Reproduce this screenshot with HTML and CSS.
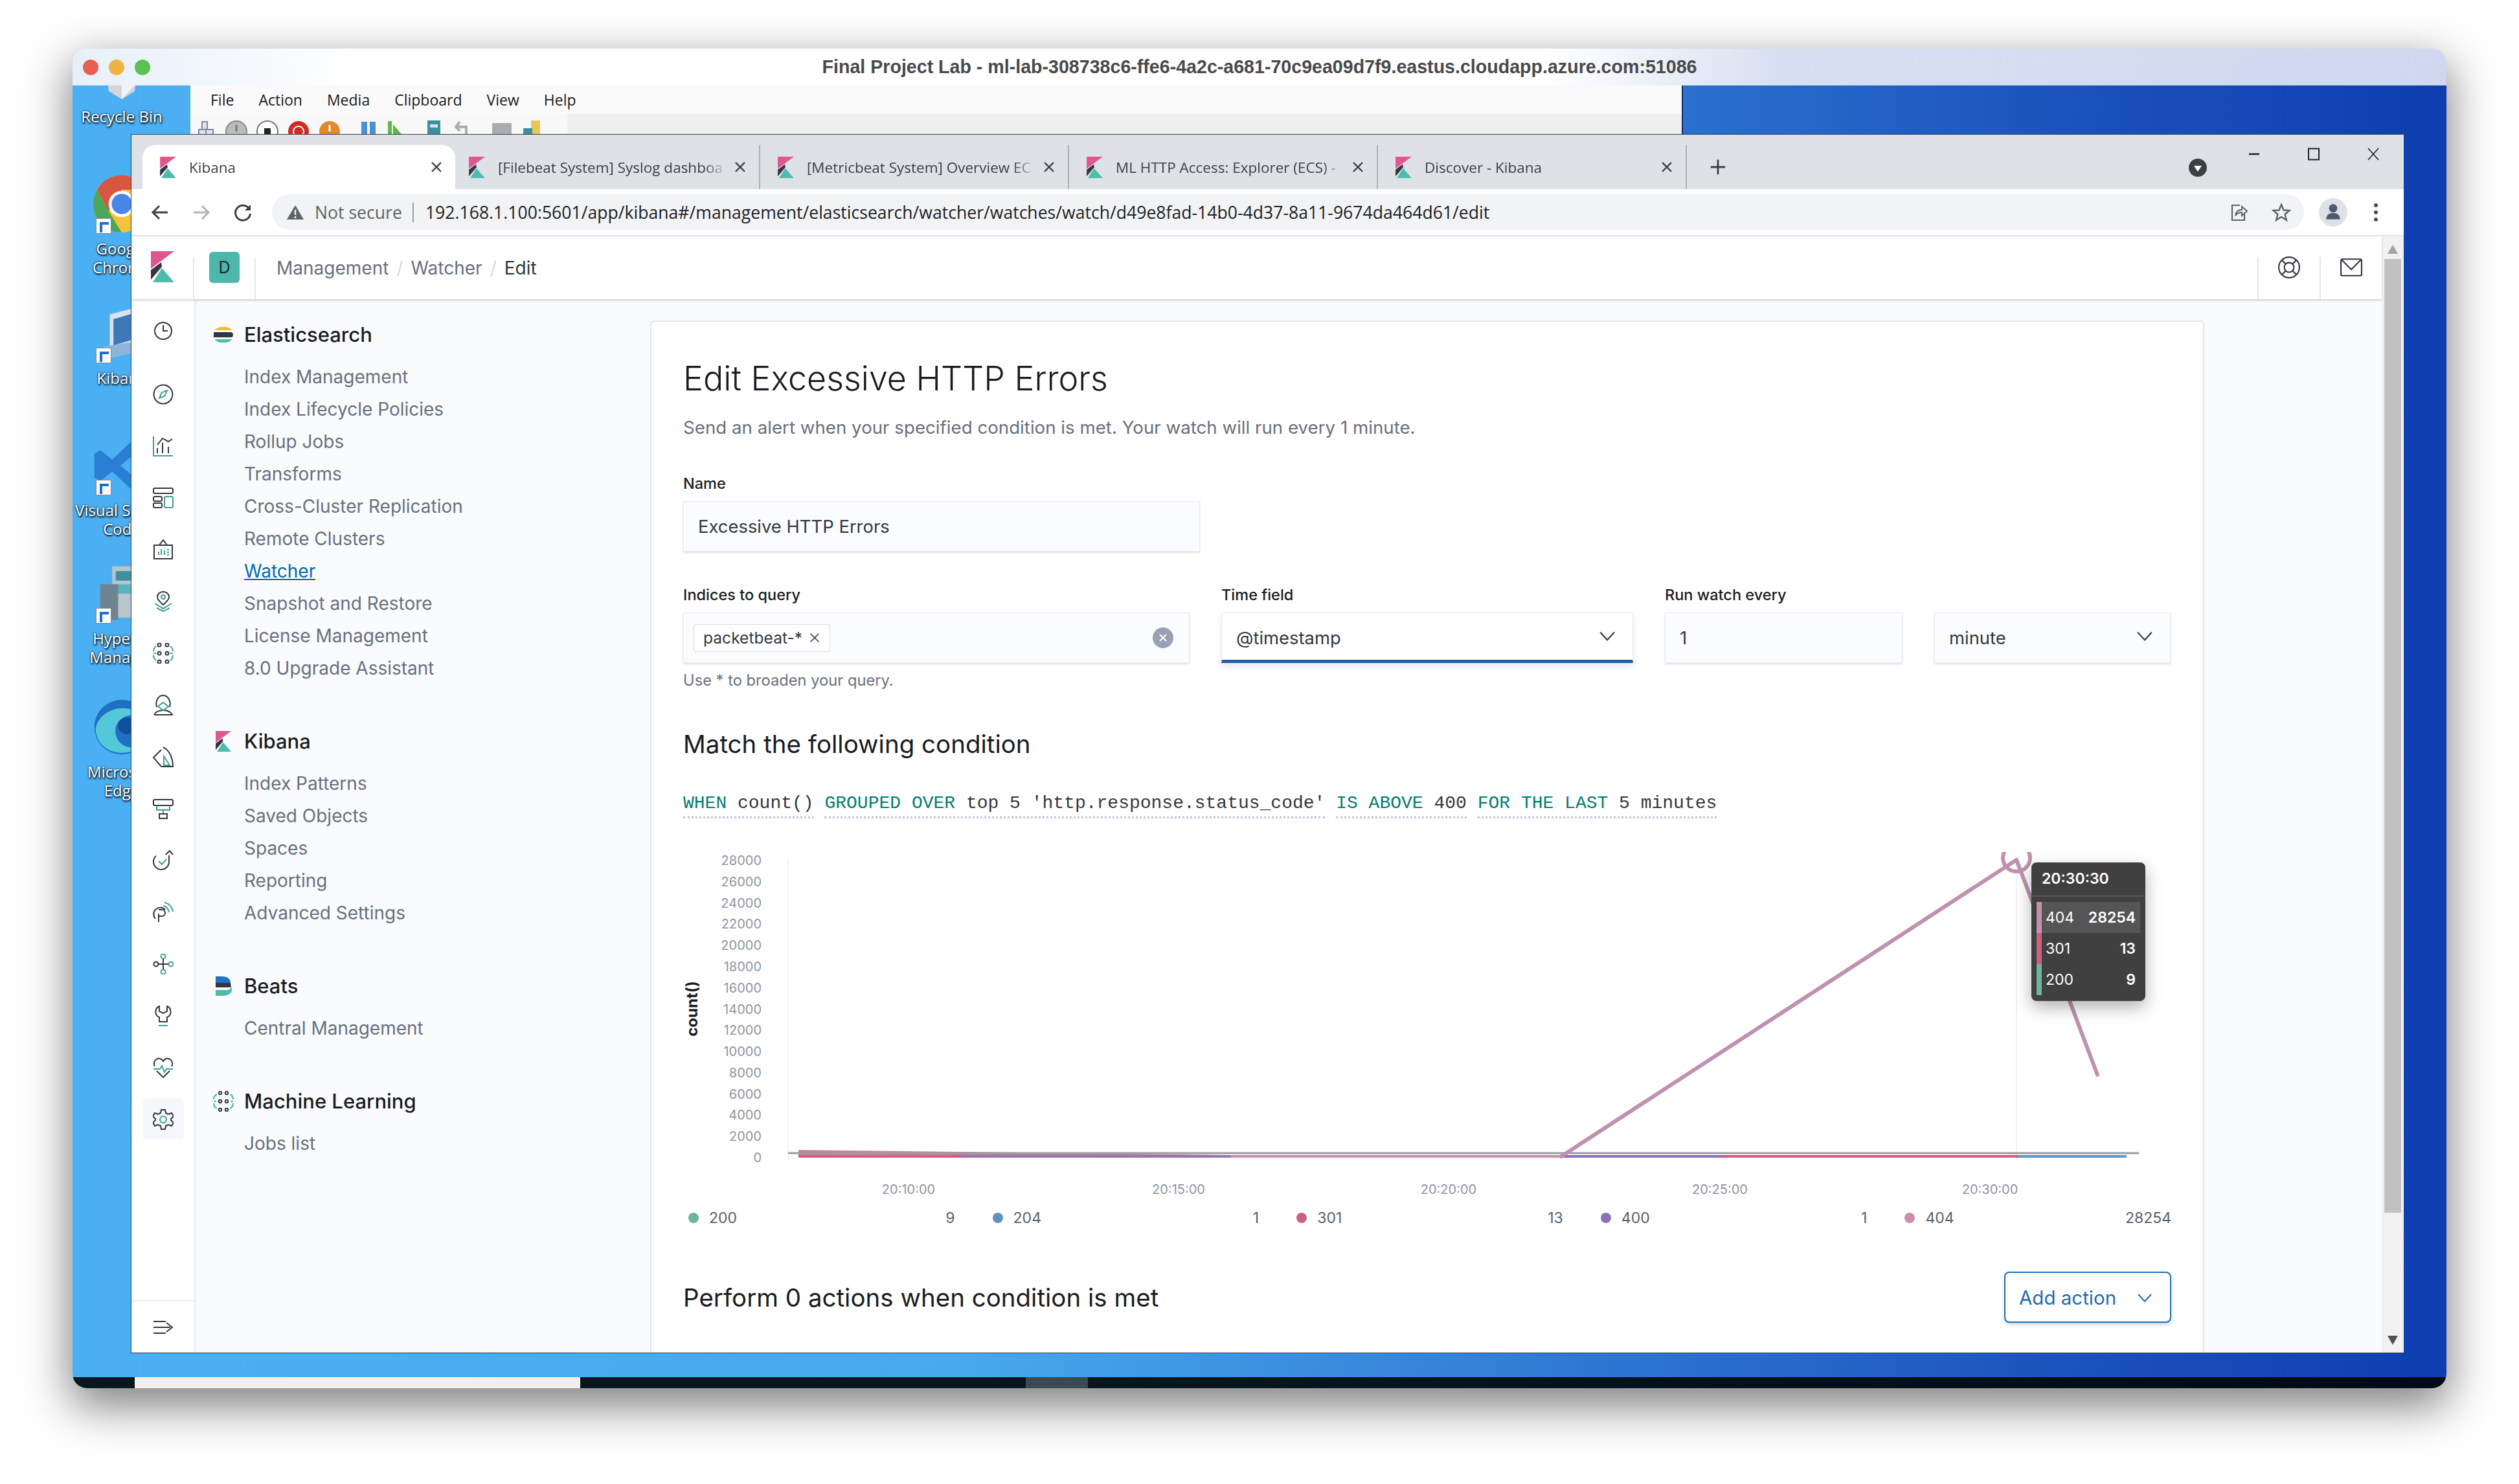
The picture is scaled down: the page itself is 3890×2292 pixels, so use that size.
FILE: index.html
```html
<!DOCTYPE html>
<html>
<head>
   <meta charset="UTF-8">
   <title>Edit Excessive HTTP Errors - Kibana</title>
   <link rel="stylesheet" href="styles.css">
</head>
<body>
<svg class="defs" width="0" height="0">
   <symbol id="kib" viewBox="0 0 36 48">
      <path fill="#e0568f" d="M0 0H36L0 27Z"/>
      <path fill="#343741" d="M0 29L16 17L17 24L0 44Z"/>
      <path fill="#4cbcae" d="M3 48L17 26L36 48Z"/>
   </symbol>
   <symbol id="x" viewBox="0 0 20 20">
      <path d="M3 3L17 17M17 3L3 17" fill="none" stroke="#3c4043" stroke-width="2.4"/>
   </symbol>
   <symbol id="chev" viewBox="0 0 24 24">
      <path d="M2 7L12 18L22 7" fill="none" stroke="currentColor" stroke-width="2"/>
   </symbol>
</svg>

<div class="mac">
   <div class="mac-title">
      <div class="lights"><i class="red"></i><i class="yellow"></i><i class="green"></i></div>
      <div class="mac-name">Final Project Lab - ml-lab-308738c6-ffe6-4a2c-a681-70c9ea09d7f9.eastus.cloudapp.azure.com:51086</div>
   </div>

   <div class="desktop">
      <div class="desk-icon recycle">
         <svg class="desk-pic" viewBox="0 0 100 100"><path fill="#d4d6da" d="M24 30L76 30L72 82L50 96L28 82Z"/><path fill="#f2f3f5" d="M50 60L72 72L50 96Z"/></svg>
         <span>Recycle Bin</span>
      </div>
      <div class="desk-icon chrome">
         <svg class="desk-pic" viewBox="0 0 100 100">
            <circle cx="50" cy="50" r="48" fill="#f5c33b"/>
            <path fill="#d8553f" d="M8.4 26A48 48 0 0 1 91.6 26H50L28 62Z"/>
            <path fill="#4fa657" d="M8.4 26L28 62L50 98A48 48 0 0 1 8.4 26Z"/>
            <circle cx="50" cy="50" r="22" fill="#fff"/>
            <circle cx="50" cy="50" r="17" fill="#4a86e8"/>
         </svg>
         <b class="shortcut"></b>
         <span>Google Chrome</span>
      </div>
      <div class="desk-icon kib-short">
         <svg class="desk-pic" viewBox="0 0 100 100">
            <path fill="#d9e3ee" d="M30 18L76 6V70L30 80Z"/>
            <path fill="#3f78b8" d="M36 26L70 16V60L36 70Z"/>
            <path fill="#8fb4da" d="M20 72L82 62L92 78L26 92Z"/>
         </svg>
         <b class="shortcut"></b>
         <span>Kibana</span>
      </div>
      <div class="desk-icon vs">
         <svg class="desk-pic" viewBox="0 0 100 100">
            <path fill="#2a7fd4" d="M72 4L92 14V86L72 96L34 60L14 76L4 70V30L14 24L34 40ZM72 30L48 50L72 70Z"/>
         </svg>
         <b class="shortcut"></b>
         <span>Visual Studio Code</span>
      </div>
      <div class="desk-icon hyper">
         <svg class="desk-pic" viewBox="0 0 100 100">
            <rect x="34" y="4" width="52" height="86" fill="#b9c4cd"/>
            <rect x="40" y="12" width="40" height="16" fill="#3f8f9e"/>
            <rect x="40" y="34" width="40" height="16" fill="#5cb3c0"/>
            <rect x="14" y="34" width="30" height="60" fill="#6f8491"/>
         </svg>
         <b class="shortcut"></b>
         <span>Hyper-V Manager</span>
      </div>
      <div class="desk-icon edge">
         <svg class="desk-pic" viewBox="0 0 100 100">
            <circle cx="50" cy="50" r="46" fill="#1f6fc4"/>
            <path fill="#54c8d8" d="M6 54C10 20 62 4 86 34C70 22 34 34 40 62C44 84 70 92 90 74C70 104 10 100 6 54Z"/>
            <circle cx="58" cy="48" r="14" fill="#0f4f9c"/>
         </svg>
         <span>Microsoft Edge</span>
      </div>

      <div class="vm-window">
         <div class="vm-menu">
            <span>File</span><span>Action</span><span>Media</span><span>Clipboard</span><span>View</span><span>Help</span>
         </div>
         <div class="vm-tools">
            <div class="vm-bar">
               <svg width="30" height="34" viewBox="0 0 30 34"><path d="M3 16h11v14H3zM8 4h8v12H8zM14 16h11v14H14z" fill="#dfe3ea" stroke="#8088a0" stroke-width="2"/></svg>
               <svg width="34" height="36" viewBox="0 0 34 36"><circle cx="17" cy="19" r="16" fill="#bbb" stroke="#888" stroke-width="2"/><path d="M17 9v10" stroke="#777" stroke-width="3"/></svg>
               <svg width="34" height="36" viewBox="0 0 34 36"><circle cx="17" cy="19" r="16" fill="#fff" stroke="#777" stroke-width="2"/><rect x="12" y="14" width="10" height="10" fill="#222"/></svg>
               <svg width="34" height="36" viewBox="0 0 34 36"><circle cx="17" cy="19" r="16" fill="#d02c24"/><circle cx="17" cy="19" r="8" fill="none" stroke="#fff" stroke-width="2"/></svg>
               <svg width="34" height="36" viewBox="0 0 34 36"><circle cx="17" cy="19" r="16" fill="#e08a2a"/><path d="M17 9v10" stroke="#fff" stroke-width="3"/></svg>
               <svg class="vm-gap" width="26" height="30" viewBox="0 0 26 30"><path d="M2 4h9v24H2zM15 4h9v24h-9z" fill="#4a90d9"/></svg>
               <svg width="30" height="30" viewBox="0 0 30 30"><path d="M3 3h6v26H3zM11 8l17 20H11z" fill="#5cb848"/></svg>
               <svg class="vm-gap" width="32" height="36" viewBox="0 0 32 36"><rect x="4" y="2" width="20" height="30" fill="#3d8fa0"/><rect x="8" y="8" width="12" height="5" fill="#cfe6ec"/></svg>
               <svg width="26" height="30" viewBox="0 0 26 30"><path d="M8 4L2 12L8 18M3 12H18V28" fill="none" stroke="#a8adb5" stroke-width="4"/></svg>
               <svg class="vm-gap" width="34" height="36" viewBox="0 0 34 36"><rect x="2" y="6" width="30" height="28" fill="#a9adb2"/></svg>
               <svg width="30" height="36" viewBox="0 0 30 36"><rect x="14" y="2" width="14" height="32" fill="#e8c75c"/><rect x="2" y="14" width="14" height="20" fill="#3d8fa0"/></svg>
            </div>
         </div>
      </div>

      <div class="browser">
         <div class="tabs">
            <div class="tab active">
               <svg class="fav"><use href="#kib"/></svg>
               <span class="tab-name">Kibana</span>
               <svg class="tab-x"><use href="#x"/></svg>
            </div>
            <div class="tab">
               <svg class="fav"><use href="#kib"/></svg>
               <span class="tab-name">[Filebeat System] Syslog dashboa</span>
               <svg class="tab-x"><use href="#x"/></svg>
            </div>
            <div class="tab">
               <svg class="fav"><use href="#kib"/></svg>
               <span class="tab-name">[Metricbeat System] Overview EC</span>
               <svg class="tab-x"><use href="#x"/></svg>
            </div>
            <div class="tab">
               <svg class="fav"><use href="#kib"/></svg>
               <span class="tab-name">ML HTTP Access: Explorer (ECS) -</span>
               <svg class="tab-x"><use href="#x"/></svg>
            </div>
            <div class="tab">
               <svg class="fav"><use href="#kib"/></svg>
               <span class="tab-name">Discover - Kibana</span>
               <svg class="tab-x"><use href="#x"/></svg>
            </div>
            <svg class="new-tab" viewBox="0 0 28 28"><path d="M14 2V26M2 14H26" stroke="#3c4043" stroke-width="3"/></svg>
            <div class="tab-search"><svg viewBox="0 0 28 28"><circle cx="14" cy="14" r="14" fill="#3c4043"/><path d="M8 11H20L14 20Z" fill="#fff"/></svg></div>
            <div class="win-btns">
               <svg viewBox="0 0 20 20"><path d="M2 10H18" stroke="#222" stroke-width="2.4"/></svg>
               <svg viewBox="0 0 20 20"><rect x="2" y="1.5" width="16" height="17" fill="none" stroke="#222" stroke-width="2"/></svg>
               <svg viewBox="0 0 20 20"><path d="M2 1L18 19M18 1L2 19" stroke="#222" stroke-width="1.6"/></svg>
            </div>
         </div>

         <div class="toolbar">
            <svg class="nav-btn" viewBox="0 0 30 30"><path d="M27 15H4M14 5L4 15L14 25" fill="none" stroke="#3c4043" stroke-width="3"/></svg>
            <svg class="nav-btn" viewBox="0 0 30 30"><path d="M3 15H26M16 5L26 15L16 25" fill="none" stroke="#b0b3b8" stroke-width="3"/></svg>
            <svg class="nav-btn" viewBox="0 0 30 30"><path d="M25 10A11.500 11.500 0 1 0 26.500 17" fill="none" stroke="#3c4043" stroke-width="3"/><path d="M27 3V12H18Z" fill="#3c4043"/></svg>
            <div class="omnibox">
               <svg class="warn" viewBox="0 0 28 24"><path d="M14 1L27 23H1Z" fill="#5f6368"/><path d="M14 8V16M14 18V21" stroke="#f1f3f4" stroke-width="2.500"/></svg>
               <span class="not-secure">Not secure</span>
               <i class="omni-sep"></i>
               <span class="url">192.168.1.100:5601/app/kibana#/management/elasticsearch/watcher/watches/watch/d49e8fad-14b0-4d37-8a11-9674da464d61/edit</span>
               <svg class="omni-icon" viewBox="0 0 30 30"><path d="M17 4H5V27H24V17" fill="none" stroke="#5f6368" stroke-width="2.200"/><path d="M10 20C11 13 16 11 20 11V6L28 13L20 20V15C16 15 13 16 10 20Z" fill="none" stroke="#5f6368" stroke-width="2"/></svg>
               <svg class="omni-icon" viewBox="0 0 30 30"><path d="M15 3L18.500 11.500L27.500 12L20.500 18L23 27L15 22L7 27L9.500 18L2.500 12L11.500 11.500Z" fill="none" stroke="#5f6368" stroke-width="2.400"/></svg>
            </div>
            <div class="profile"><svg viewBox="0 0 30 30"><circle cx="15" cy="9" r="6" fill="#4b5a73"/><path d="M5 25C5 18 10 16 15 16S25 18 25 25Z" fill="#4b5a73"/></svg></div>
            <svg class="kebab" viewBox="0 0 8 30"><circle cx="4" cy="4" r="3" fill="#4a4d52"/><circle cx="4" cy="15" r="3" fill="#4a4d52"/><circle cx="4" cy="26" r="3" fill="#4a4d52"/></svg>
         </div>

         <div class="viewport">
            <div class="page">
               <header class="top">
                  <div class="logo-cell"><svg class="logo"><use href="#kib"/></svg></div>
                  <div class="avatar-cell"><div class="avatar">D</div></div>
                  <nav class="crumbs">
                     <span>Management</span><i>/</i><span>Watcher</span><i>/</i><span class="last">Edit</span>
                  </nav>
                  <div class="top-icon">
                     <svg viewBox="0 0 32 32" fill="none" stroke="#343741" stroke-width="2"><circle cx="16" cy="16" r="15"/><circle cx="16" cy="16" r="7"/><path d="M6 6L11 11M26 6L21 11M6 26L11 21M26 26L21 21"/></svg>
                  </div>
                  <div class="top-icon">
                     <svg viewBox="0 0 32 32" fill="none" stroke="#343741" stroke-width="2"><rect x="1" y="4" width="30" height="24" rx="2"/><path d="M2 5L16 19L30 5"/></svg>
                  </div>
               </header>

               <div class="app">
                  <aside class="rail">
                     <svg class="rail-ico recent" viewBox="0 0 32 32"><circle class="d" cx="16" cy="16" r="13"/><path class="d" d="M16 7V16H23"/></svg>
                     <svg class="rail-ico" viewBox="0 0 32 32"><circle class="d" cx="16" cy="16" r="14.500"/><path class="t" d="M22 10L18.500 18.500L10 22L13.500 13.500Z"/></svg>
                     <svg class="rail-ico" viewBox="0 0 32 32"><path class="t" d="M1 1V31H31"/><path class="d" d="M7 14L15 4L24 9L30 5M7 19V27M15 11V27M24 17V27"/></svg>
                     <svg class="rail-ico" viewBox="0 0 32 32"><rect class="d" x="1" y="1" width="30" height="8" rx="2"/><rect class="d" x="1" y="14" width="13" height="7" rx="2"/><rect class="d" x="1" y="24" width="13" height="7" rx="2"/><rect class="t" x="18" y="14" width="13" height="17" rx="2"/></svg>
                     <svg class="rail-ico" viewBox="0 0 32 32"><path class="d" d="M2 9H30V30H2ZM10 9L16 1L22 9"/><path class="t" d="M9 24V19M13 24V15M18 24V17M22 16H25M22 20H25M22 24H25"/></svg>
                     <svg class="rail-ico" viewBox="0 0 32 32"><path class="d" d="M16 1C10 1 7 5 7 9C7 14 13 18 16 21C19 18 25 14 25 9C25 5 22 1 16 1Z"/><circle class="t" cx="16" cy="9" r="3"/><path class="t" d="M3 19L16 27L29 19M6 26L16 31L26 26"/></svg>
                     <svg class="rail-ico" viewBox="0 0 32 32"><circle class="d" cx="10" cy="3" r="2.500"/><circle class="d" cx="22" cy="3" r="2.500"/><circle class="d" cx="10" cy="16" r="2.500"/><circle class="d" cx="22" cy="16" r="2.500"/><circle class="d" cx="10" cy="29" r="2.500"/><circle class="d" cx="22" cy="29" r="2.500"/><path class="t" d="M5 5C2 7 1 10 1 13M1 19C1 22 2 25 5 27M27 5C30 7 31 10 31 13M31 19C31 22 30 25 27 27M1 16H5M27 16H31"/></svg>
                     <svg class="rail-ico" viewBox="0 0 32 32"><path class="d" d="M6 19C3 8 10 1 16 1C22 1 29 8 26 19M2 31C5 25 10 24 16 24C22 24 27 25 30 31H2"/><path class="t" d="M16 12L24 18L16 24L8 18Z"/></svg>
                     <svg class="rail-ico" viewBox="0 0 32 32"><path class="d" d="M16 1C26 6 31 18 31 31H13M13 5L1 17L13 31"/><path class="t" d="M17 15L26 29H17Z"/></svg>
                     <svg class="rail-ico" viewBox="0 0 32 32"><rect class="d" x="1" y="2" width="30" height="9" rx="2"/><path class="t" d="M6 11V18H26V11M16 18V24"/><rect class="d" x="10" y="24" width="12" height="7"/></svg>
                     <svg class="rail-ico" viewBox="0 0 32 32"><path class="d" d="M25 8V17A12 12 0 1 1 5 9"/><path class="d" d="M20 7L26 1L31 7"/><path class="t" d="M9 17L14 22L21 14"/></svg>
                     <svg class="rail-ico" viewBox="0 0 32 32"><path class="d" d="M9 31V18M9 12H14A5 5 0 0 1 14 22H9M4 26A10 10 0 1 1 19 12"/><path class="t" d="M16 6A11 11 0 0 1 25 16M18 1A16 16 0 0 1 31 15"/></svg>
                     <svg class="rail-ico" viewBox="0 0 32 32"><circle class="t" cx="16" cy="4" r="3.500"/><circle class="t" cx="28" cy="16" r="3.500"/><circle class="t" cx="16" cy="28" r="3.500"/><circle class="d" cx="5" cy="16" r="3.500"/><path class="d" d="M9 16H24M16 8V24"/></svg>
                     <svg class="rail-ico" viewBox="0 0 32 32"><path class="d" d="M10 1C3 4 2 15 10 18V25H22V18C30 15 29 4 22 1V9L16 12L10 9Z"/><path class="t" d="M9 31H23"/></svg>
                     <svg class="rail-ico" viewBox="0 0 32 32"><path class="d" d="M3 14C-2 4 11 -3 16 6C21 -3 34 4 29 14M6 21L16 31L26 21"/><path class="t" d="M1 18H11L14 13L18 23L21 18H31"/></svg>
                     <div class="rail-on">
                        <svg class="rail-gear" viewBox="0 0 32 32"><path class="d" d="M13 1H19L20 6L24 8L29 6L32 11L28 15V17L32 21L29 26L24 24L20 26L19 31H13L12 26L8 24L3 26L0 21L4 17V15L0 11L3 6L8 8L12 6Z"/><circle class="t" cx="16" cy="16" r="5"/></svg>
                     </div>
                     <div class="rail-foot">
                        <svg class="rail-ico" viewBox="0 0 32 32"><path class="d" d="M1 7H20M1 16H27M1 25H20M21 9L30 16L21 23"/></svg>
                     </div>
                  </aside>

                  <div class="side">
                     <h3 class="side-head">
                        <svg viewBox="0 0 32 32"><path fill="#f0bf30" d="M3 9C6 2 26 2 29 9Z"/><path fill="#343741" d="M1 12H27A4 4 0 0 1 27 20H1Z"/><path fill="#4cbcae" d="M3 23H29C26 30 6 30 3 23Z"/></svg>
                        Elasticsearch
                     </h3>
                     <ul class="side-list">
                        <li>Index Management</li>
                        <li>Index Lifecycle Policies</li>
                        <li>Rollup Jobs</li>
                        <li>Transforms</li>
                        <li>Cross-Cluster Replication</li>
                        <li>Remote Clusters</li>
                        <li class="current">Watcher</li>
                        <li>Snapshot and Restore</li>
                        <li>License Management</li>
                        <li>8.0 Upgrade Assistant</li>
                     </ul>
                     <h3 class="side-head">
                        <svg viewBox="0 0 36 48"><use href="#kib"/></svg>
                        Kibana
                     </h3>
                     <ul class="side-list">
                        <li>Index Patterns</li>
                        <li>Saved Objects</li>
                        <li>Spaces</li>
                        <li>Reporting</li>
                        <li>Advanced Settings</li>
                     </ul>
                     <h3 class="side-head">
                        <svg viewBox="0 0 32 32"><path fill="#1f72c4" d="M4 1H14C22 1 27 5 27 11H4Z"/><path fill="#343741" d="M4 11H27L28 18H4Z"/><path fill="#4cbcae" d="M4 22H24L29 18C31 26 24 31 16 31H4Z"/></svg>
                        Beats
                     </h3>
                     <ul class="side-list">
                        <li>Central Management</li>
                     </ul>
                     <h3 class="side-head">
                        <svg viewBox="0 0 32 32" fill="none"><g stroke="#343741" stroke-width="2"><circle cx="11" cy="3" r="2.200"/><circle cx="21" cy="3" r="2.200"/><circle cx="11" cy="16" r="2.200"/><circle cx="21" cy="16" r="2.200"/><circle cx="11" cy="29" r="2.200"/><circle cx="21" cy="29" r="2.200"/></g><path stroke="#4cbcae" stroke-width="2.200" d="M6 5C2 7 1 10 1 13M1 19C1 22 2 25 6 27M26 5C30 7 31 10 31 13M31 19C31 22 30 25 26 27M1 16H5M27 16H31"/></svg>
                        Machine Learning
                     </h3>
                     <ul class="side-list">
                        <li>Jobs list</li>
                     </ul>
                  </div>

                  <main class="content">
                     <section class="panel">
                        <h1 class="title">Edit Excessive HTTP Errors</h1>
                        <p class="sub">Send an alert when your specified condition is met. Your watch will run every 1 minute.</p>

                        <label class="lbl lbl-first">Name</label>
                        <div class="field name-field">Excessive HTTP Errors</div>

                        <div class="form-row">
                           <div class="col col-indices">
                              <label class="lbl">Indices to query</label>
                              <div class="field combo">
                                 <span class="chip">packetbeat-* <svg viewBox="0 0 20 20"><path d="M3 3L17 17M17 3L3 17" stroke="#343741" stroke-width="1.800"/></svg></span>
                                 <svg class="clear" viewBox="0 0 32 32"><circle cx="16" cy="16" r="16" fill="#98a2b3"/><path d="M11 11L21 21M21 11L11 21" stroke="#fff" stroke-width="2"/></svg>
                              </div>
                              <p class="help">Use * to broaden your query.</p>
                           </div>
                           <div class="col col-time">
                              <label class="lbl">Time field</label>
                              <div class="field select focused">@timestamp<svg><use href="#chev"/></svg></div>
                           </div>
                           <div class="col col-every">
                              <label class="lbl">Run watch every</label>
                              <div class="field">1</div>
                           </div>
                           <div class="col col-unit">
                              <label class="lbl">&nbsp;</label>
                              <div class="field select">minute<svg><use href="#chev"/></svg></div>
                           </div>
                        </div>

                        <h2 class="section cond-head">Match the following condition</h2>
                        <div class="expr"><span class="kw">WHEN <em>count()</em></span> <span class="kw">GROUPED OVER <em>top 5 'http.response.status_code'</em></span> <span class="kw">IS ABOVE <em>400</em></span> <span class="kw">FOR THE LAST <em>5 minutes</em></span></div>

                        <div class="chart">
                           <svg class="plot" viewBox="1054 1300 2298 560">
                              <defs>
                                 <clipPath id="plot-clip"><rect x="1054" y="1316" width="2298" height="544"/></clipPath>
                                 <linearGradient id="wedge" x1="0" x2="1" y1="0" y2="0">
                                    <stop offset="0" stop-color="#c77fa6"/>
                                    <stop offset="0.55" stop-color="#b77f9e"/>
                                    <stop offset="1" stop-color="#c28fb0"/>
                                 </linearGradient>
                              </defs>
                              <text class="axis-title" transform="translate(1076 1558) rotate(-90)" text-anchor="middle">count()</text>
                              <g class="ticks" text-anchor="end">
                                 <text x="1175" y="1336">28000</text>
                                 <text x="1175" y="1369">26000</text>
                                 <text x="1175" y="1402">24000</text>
                                 <text x="1175" y="1434">22000</text>
                                 <text x="1175" y="1467">20000</text>
                                 <text x="1175" y="1500">18000</text>
                                 <text x="1175" y="1533">16000</text>
                                 <text x="1175" y="1566">14000</text>
                                 <text x="1175" y="1598">12000</text>
                                 <text x="1175" y="1631">10000</text>
                                 <text x="1175" y="1664">8000</text>
                                 <text x="1175" y="1697">6000</text>
                                 <text x="1175" y="1729">4000</text>
                                 <text x="1175" y="1762">2000</text>
                                 <text x="1175" y="1795">0</text>
                              </g>
                              <g class="ticks" text-anchor="middle">
                                 <text x="1402" y="1844">20:10:00</text>
                                 <text x="1819" y="1844">20:15:00</text>
                                 <text x="2236" y="1844">20:20:00</text>
                                 <text x="2655" y="1844">20:25:00</text>
                                 <text x="3072" y="1844">20:30:00</text>
                              </g>
                              <path d="M1216 1325V1792" stroke="#f3f3f7" stroke-width="2"/>
                              <path d="M3113 1325V1792" stroke="#f1f1f8" stroke-width="2"/>
                              <path d="M1232 1776L1900 1784L2410 1786V1788H1232Z" fill="url(#wedge)"/>
                              <path d="M1232 1786H1484" stroke="#cf5d80" stroke-width="4"/>
                              <path d="M1484 1786H1900" stroke="#8f6fb8" stroke-width="3"/>
                              <path d="M1900 1786H2410" stroke="#c28fb0" stroke-width="4"/>
                              <path d="M2410 1786H2657" stroke="#8f6fb8" stroke-width="4"/>
                              <path d="M2657 1786H3116" stroke="#c8607f" stroke-width="4"/>
                              <path d="M3116 1786H3283" stroke="#5f98c8" stroke-width="4"/>
                              <path d="M1216 1781H3302" stroke="#9b9b9b" stroke-width="3"/>
                              <g clip-path="url(#plot-clip)" fill="none" stroke="#c090b0" stroke-width="6" stroke-linecap="round" stroke-linejoin="round">
                                 <path d="M2410 1786L3113 1328L3238 1660"/>
                                 <circle cx="3113" cy="1325" r="21"/>
                              </g>
                           </svg>
                           <div class="tip">
                              <div class="tip-time">20:30:30</div>
                              <div class="tip-rows">
                                 <div class="tip-row hot"><i class="c404"></i><span>404</span><b>28254</b></div>
                                 <div class="tip-row"><i class="c301"></i><span>301</span><b>13</b></div>
                                 <div class="tip-row"><i class="c200"></i><span>200</span><b>9</b></div>
                              </div>
                           </div>
                        </div>

                        <div class="legend">
                           <div class="leg"><i class="c200"></i><span>200</span><span>9</span></div>
                           <div class="leg"><i class="c204"></i><span>204</span><span>1</span></div>
                           <div class="leg"><i class="c301"></i><span>301</span><span>13</span></div>
                           <div class="leg"><i class="c400"></i><span>400</span><span>1</span></div>
                           <div class="leg"><i class="c404"></i><span>404</span><span>28254</span></div>
                        </div>

                        <div class="actions">
                           <h2 class="section">Perform 0 actions when condition is met</h2>
                           <button class="add-btn">Add action <svg><use href="#chev"/></svg></button>
                        </div>
                     </section>
                  </main>
               </div>
            </div>
            <div class="scroll">
               <svg class="arrow" viewBox="0 0 16 14"><path d="M8 0L16 14H0Z" fill="#a3a3a3"/></svg>
               <div class="thumb"></div>
               <svg class="arrow down" viewBox="0 0 16 14"><path d="M0 0H16L8 14Z" fill="#505050"/></svg>
            </div>
         </div>
      </div>
   </div>

   <div class="taskbar">
      <i class="bar-dark first"></i><i class="bar-light"></i><i class="bar-dark first-wide"></i><i class="bar-mid"></i><i class="bar-dark rest"></i>
   </div>
</div>
</body>
</html>
```

FILE: styles.css
```css
* {
   box-sizing: border-box;
}

html, body {
   margin: 0;
   width: 3890px;
   height: 2292px;
   overflow: hidden;
   background: #fff;
}

.defs {
   position: absolute;
}

/* mac window round the remote desktop */
.mac {
   margin: 75px 0 0 112px;
   width: 3666px;
   height: 2069px;
   display: flex;
   flex-direction: column;
   border-radius: 22px;
   box-shadow: 0 24px 70px 4px rgba(0, 0, 0, 0.5);
   overflow: hidden;
}

.mac-title {
   height: 57px;
   flex: none;
   display: flex;
   align-items: center;
   position: relative;
   background: linear-gradient(90deg, #e6eff8 0, #fff 12%, #fff 62%, #d6e0f1 72%, #cfd8ef 100%);
}

.lights {
   display: flex;
   gap: 16px;
   padding-left: 16px;
}

.lights i {
   width: 24px;
   height: 24px;
   border-radius: 50%;
}

.red { background: #e9604f; }
.yellow { background: #f0b540; }
.green { background: #5cc24f; }

.mac-name {
   position: absolute;
   left: 0;
   right: 0;
   text-align: center;
   font: bold 28.6px "Liberation Sans", sans-serif;
   color: #4a4a4a;
}

.desktop {
   flex: 1;
   position: relative;
   background: linear-gradient(90deg, #4bb0f3 0, #47a8ec 38%, #3585d8 57%, #1b52bd 84%, #0e3eae 100%);
   overflow: hidden;
}

.taskbar {
   height: 17px;
   flex: none;
   display: flex;
}

.taskbar i { display: block; }
.bar-dark { background: #06171f; }
.bar-dark.first { width: 96px; }
.bar-dark.first-wide { width: 688px; }
.bar-dark.rest { flex: 1; background: linear-gradient(90deg, #06171f, #020a1a); }
.bar-light { width: 688px; background: #f1eff0; }
.bar-mid { width: 96px; background: #3a4a50; }

/* desktop shortcuts */
.desk-icon {
   position: absolute;
   left: 0;
   width: 152px;
   text-align: center;
   font: 24px/29px "Open Sans", sans-serif;
   color: #fff;
   text-shadow: 1px 2px 3px #000, 0 0 3px #000;
}

.desk-pic {
   display: block;
   width: 92px;
   height: 92px;
   margin: 0 auto 8px;
}

.recycle { top: -67px; }
.chrome { top: 137px; }
.kib-short { top: 337px; }
.vs { top: 541px; }
.hyper { top: 739px; }
.edge { top: 945px; }

.shortcut {
   position: absolute;
   left: 36px;
   top: 68px;
   width: 24px;
   height: 24px;
   background: #fff;
   border: 1px solid #888;
}

.shortcut::after {
   content: "";
   position: absolute;
   left: 5px;
   top: 5px;
   width: 10px;
   height: 12px;
   border-top: 4px solid #1c6fd0;
   border-left: 4px solid #1c6fd0;
}

/* hyper-v manager behind the browser */
.vm-window {
   position: absolute;
   left: 182px;
   top: 0;
   width: 2305px;
   height: 75px;
   background: #f0f0f0;
   border-right: 2px solid #10306a;
   overflow: hidden;
}

.vm-menu {
   height: 44px;
   display: flex;
   align-items: center;
   gap: 38px;
   padding-left: 31px;
   background: #fafafa;
   font: 23px "Open Sans", sans-serif;
   color: #1a1a1a;
}

.vm-tools {
   height: 31px;
}

.vm-bar {
   width: 582px;
   height: 31px;
   display: flex;
   gap: 14px;
   padding: 8px 0 0 10px;
   background: #f8f8f8;
}

.vm-gap {
   margin-left: 16px;
}

/* chrome */
.browser {
   position: absolute;
   left: 90px;
   top: 75px;
   width: 3510px;
   height: 1883px;
   display: flex;
   flex-direction: column;
   background: #fff;
   border: solid #2f3f52;
   border-width: 1px 0 1px 1px;
   overflow: hidden;
}

.tabs {
   height: 84px;
   flex: none;
   display: flex;
   align-items: flex-end;
   padding-left: 17px;
   position: relative;
   background: #dee1e6;
   font: 22.5px "Open Sans", sans-serif;
   color: #3c4043;
}

.tab {
   width: 477px;
   height: 68px;
   flex: none;
   display: flex;
   align-items: center;
   padding: 0 19px 0 27px;
   position: relative;
   border-right: 2px solid #aeb2b8;
   background-clip: padding-box;
}

.tab:first-child {
   width: 483px;
   margin-right: -6px;
}

.tab.active {
   background: #fff;
   border-right: 0;
   border-radius: 20px 20px 0 0;
   z-index: 1;
}

.fav {
   width: 25px;
   height: 33px;
   flex: none;
}

.tab-name {
   flex: 1;
   margin-left: 20px;
   white-space: nowrap;
   -webkit-mask-image: linear-gradient(90deg, #000 90%, transparent);
   mask-image: linear-gradient(90deg, #000 90%, transparent);
}

.tab-x {
   width: 20px;
   height: 20px;
   flex: none;
   margin-left: 10px;
}

.new-tab {
   width: 26px;
   height: 26px;
   margin: 0 0 21px 35px;
   flex: none;
}

.tab-search {
   position: absolute;
   left: 3177px;
   top: 37px;
   width: 28px;
   height: 28px;
}

.win-btns {
   position: absolute;
   right: 37px;
   top: 20px;
   display: flex;
   gap: 72px;
}

.win-btns svg {
   width: 20px;
   height: 20px;
}

.toolbar {
   height: 73px;
   flex: none;
   display: flex;
   align-items: center;
   padding: 0 0 0 29px;
   background: #fff;
   border-bottom: 2px solid #dfe1e5;
}

.nav-btn {
   width: 30px;
   height: 30px;
   margin-right: 34px;
   flex: none;
}

.omnibox {
   width: 3138px;
   height: 55px;
   margin-left: -4px;
   flex: none;
   display: flex;
   align-items: center;
   padding: 0 20px 0 22px;
   background: #f1f3f4;
   border-radius: 28px;
   font: 26.6px "Open Sans", sans-serif;
}

.warn {
   width: 28px;
   height: 24px;
   flex: none;
}

.not-secure {
   margin-left: 16px;
   color: #5f6368;
}

.omni-sep {
   width: 2px;
   height: 30px;
   margin: 0 18px 0 16px;
   background: #9a9da2;
}

.url {
   flex: 1;
   color: #202124;
   white-space: nowrap;
}

.omni-icon {
   width: 30px;
   height: 30px;
   margin-left: 36px;
   flex: none;
}

.profile {
   width: 44px;
   height: 44px;
   margin-left: 23px;
   padding: 6px;
   border-radius: 50%;
   background: #dfe1e5;
   flex: none;
}

.profile svg {
   display: block;
}

.kebab {
   width: 8px;
   height: 30px;
   margin-left: 40px;
   flex: none;
}

/* kibana */
.viewport {
   flex: 1;
   min-height: 0;
   display: flex;
}

.page {
   flex: 1;
   min-width: 0;
   display: flex;
   flex-direction: column;
   font-family: Inter, "Liberation Sans", sans-serif;
   color: #343741;
}

.scroll {
   width: 34px;
   flex: none;
   display: flex;
   flex-direction: column;
   align-items: center;
   background: #f1f1f1;
   padding-top: 13px;
}

.arrow {
   width: 16px;
   height: 14px;
   flex: none;
}

.thumb {
   width: 26px;
   height: 1473px;
   margin: 8px 0 auto;
   background: #c1c1c1;
}

.arrow.down {
   margin-bottom: 12px;
}

.top {
   height: 97px;
   flex: none;
   display: flex;
   align-items: stretch;
   background: #fff;
   box-shadow: 0 2px 3px rgba(90, 110, 150, 0.3);
   position: relative;
   z-index: 2;
}

.logo-cell {
   width: 97px;
   display: flex;
   align-items: center;
   justify-content: center;
   border-right: 2px solid #e4e7ef;
   margin-top: 32px;
   padding-bottom: 34px;
}

.logo {
   width: 36px;
   height: 48px;
   margin-top: -2px;
}

.avatar-cell {
   width: 95px;
   display: flex;
   align-items: center;
   justify-content: center;
   margin-top: 32px;
   padding-bottom: 34px;
   border-right: 2px solid #e4e7ef;
}

.avatar {
   width: 47px;
   height: 48px;
   flex: none;
   display: flex;
   align-items: center;
   justify-content: center;
   border-radius: 6px;
   background: #4db7ac;
   font-size: 25px;
   color: #20252c;
}

.crumbs {
   flex: 1;
   display: flex;
   align-items: center;
   gap: 12px;
   padding: 0 0 0 32px;
   font-size: 28px;
   color: #69707d;
}

.crumbs i {
   font-style: normal;
   color: #d3dae6;
}

.crumbs .last {
   color: #343741;
}

.top-icon {
   width: 96px;
   display: flex;
   align-items: center;
   justify-content: center;
   margin-top: 32px;
   padding-bottom: 34px;
   border-left: 2px solid #e4e7ef;
}

.top-icon svg {
   width: 34px;
   height: 34px;
   flex: none;
}

.app {
   flex: 1;
   min-height: 0;
   display: flex;
}

.rail {
   width: 97px;
   flex: none;
   display: flex;
   flex-direction: column;
   align-items: center;
   background: #fff;
   box-shadow: 2px 0 3px rgba(90, 110, 150, 0.12);
   position: relative;
}

.rail-ico {
   width: 32px;
   height: 32px;
   margin: 24px 0;
   flex: none;
}

.rail-ico.recent {
   margin: 33px 0 34px;
}

.rail-ico.recent + .rail-ico {
   margin-top: 32px;
}

.d, .t {
   fill: none;
   stroke-width: 2;
}

.d { stroke: #343741; }
.t { stroke: #3f9f94; }

.rail-on {
   width: 64px;
   height: 63px;
   margin-top: 8px;
   display: flex;
   align-items: center;
   justify-content: center;
   background: #f5f7fa;
   border-radius: 6px;
   flex: none;
}

.rail-gear {
   width: 32px;
   height: 32px;
}

.rail-foot {
   margin-top: auto;
   width: 100%;
   height: 81px;
   display: flex;
   align-items: center;
   justify-content: center;
   border-top: 2px solid #eef0f4;
}

.rail-foot .rail-ico {
   margin: 0;
}

.side {
   width: 704px;
   flex: none;
   padding: 35px 0 0 29px;
   background: #fafbfd;
}

.side-head {
   margin: 0;
   height: 40px;
   display: flex;
   align-items: center;
   gap: 16px;
   font-size: 31px;
   font-weight: 500;
   color: #1a1c21;
   line-height: 40px;
}

.side-head svg {
   width: 32px;
   height: 32px;
   flex: none;
}

.side-list {
   list-style: none;
   margin: 0 0 68px;
   padding: 20px 0 0 48px;
   font-size: 28px;
   color: #69707d;
}

.side-list li {
   height: 50px;
   line-height: 50px;
   white-space: nowrap;
}

.side-list .current {
   color: #006bb4;
   text-decoration: underline;
}

.content {
   flex: 1;
   min-width: 0;
   padding: 33px 0 0;
   background: #fafbfd;
   overflow: hidden;
}

.panel {
   width: 2400px;
   height: 1700px;
   padding: 54px 49px 0 49px;
   background: #fff;
   border: solid #e0e4ec;
   border-width: 2px 2px 0 2px;
   border-radius: 6px 6px 0 0;
}

.title {
   margin: 0;
   font-size: 52px;
   font-weight: 300;
   line-height: 68px;
   color: #1a1c21;
}

.sub {
   margin: 21px 0 0;
   font-size: 27.7px;
   line-height: 40px;
   color: #69707d;
}

.lbl {
   display: block;
   height: 36px;
   line-height: 36px;
   font-size: 23.5px;
   font-weight: 500;
   color: #1a1c21;
   margin-bottom: 9px;
}

.lbl-first {
   margin-top: 49px;
}

.field {
   height: 78px;
   display: flex;
   align-items: center;
   padding: 0 22px;
   background: #fbfcfd;
   border: 1px solid #e8eaf2;
   box-shadow: 0 2px 3px rgba(90, 110, 150, 0.2);
   font-size: 27.4px;
   color: #343741;
}

.name-field {
   width: 798px;
}

.form-row {
   display: flex;
   gap: 49px;
   margin-top: 49px;
   height: 165px;
}

.col-indices { width: 782px; }
.col-time { width: 636px; }
.col-every { width: 367px; }
.col-unit { width: 365px; }

.combo {
   padding: 0 24px 0 15px;
   justify-content: space-between;
}

.chip {
   height: 43px;
   display: flex;
   align-items: center;
   gap: 10px;
   padding: 0 14px;
   background: #fff;
   border: 1px solid #d3dae6;
   border-radius: 4px;
   font-size: 24.6px;
}

.chip svg {
   width: 18px;
   height: 18px;
}

.clear {
   width: 32px;
   height: 32px;
   flex: none;
}

.help {
   margin: 12px 0 0;
   font-size: 23.7px;
   line-height: 30px;
   color: #69707d;
}

.select {
   justify-content: space-between;
}

.select svg, .add-btn svg {
   width: 26px;
   height: 26px;
   flex: none;
   color: #343741;
}

.select svg {
   margin-right: 4px;
   margin-top: -6px;
}

.focused {
   padding-top: 4px;
   background: #fff;
   border-bottom: 5px solid #1e60a8;
   box-shadow: 0 6px 10px rgba(90, 110, 150, 0.15);
}

.section {
   margin: 0;
   font-size: 38.5px;
   font-weight: 400;
   line-height: 52px;
   color: #1a1c21;
}

.cond-head {
   margin-top: 57px;
}

.expr {
   margin-top: 46px;
   font: 28px/40px "Liberation Mono", monospace;
   white-space: nowrap;
}

.kw {
   color: #017d73;
   padding-bottom: 5px;
   border-bottom: 3px dotted #bcc4d2;
}

.kw em {
   font-style: normal;
   color: #343741;
}

.chart {
   position: relative;
   height: 560px;
   margin-top: 39px;
}

.plot {
   display: block;
   width: 2298px;
   height: 560px;
   overflow: visible;
}

.axis-title {
   font-size: 24px;
   font-weight: 700;
   fill: #1a1c21;
}

.ticks text {
   font-size: 20px;
   fill: #8d95a3;
}

.tip {
   position: absolute;
   left: 2082px;
   top: 32px;
   width: 176px;
   height: 214px;
   background: #404040;
   border-radius: 8px;
   box-shadow: 0 10px 26px rgba(0, 0, 0, 0.3);
   color: #fff;
   font-size: 23px;
}

.tip-time {
   height: 53px;
   line-height: 50px;
   padding-left: 16px;
   font-weight: 600;
   border-bottom: 2px solid #555;
}

.tip-rows {
   padding: 8px;
}

.tip-row {
   height: 48px;
   display: flex;
   align-items: center;
   padding-right: 7px;
}

.tip-row i {
   width: 8px;
   height: 100%;
   margin-right: 6px;
}

.tip-row span {
   flex: 1;
}

.tip-row b {
   font-weight: 600;
}

.hot {
   background: #555;
}

.c200 { background: #6db69b; }
.c204 { background: #6092c0; }
.c301 { background: #c9627f; }
.c400 { background: #9170b8; }
.c404 { background: #ca8eae; }

.legend {
   display: grid;
   grid-template-columns: repeat(5, 1fr);
   gap: 50px;
   margin-top: 5px;
   font-size: 23px;
   line-height: 32px;
   color: #5a606d;
}

.leg {
   display: flex;
   align-items: center;
   padding-left: 8px;
}

.leg i {
   width: 16px;
   height: 16px;
   border-radius: 50%;
   margin-right: 16px;
   flex: none;
}

.leg span:last-child {
   margin-left: auto;
}

.actions {
   margin-top: 67px;
   display: flex;
   justify-content: space-between;
   align-items: center;
}

.add-btn {
   width: 258px;
   height: 79px;
   display: flex;
   align-items: center;
   gap: 32px;
   padding: 0 0 0 21px;
   background: #fff;
   border: 2px solid #1f6fb5;
   border-radius: 8px;
   box-shadow: 0 3px 5px rgba(30, 90, 160, 0.25);
   font-family: Inter, "Liberation Sans", sans-serif;
   font-size: 29.5px;
   color: #1f6ab0;
}

.add-btn svg {
   color: #1f6ab0;
   width: 24px;
   height: 24px;
}
```
